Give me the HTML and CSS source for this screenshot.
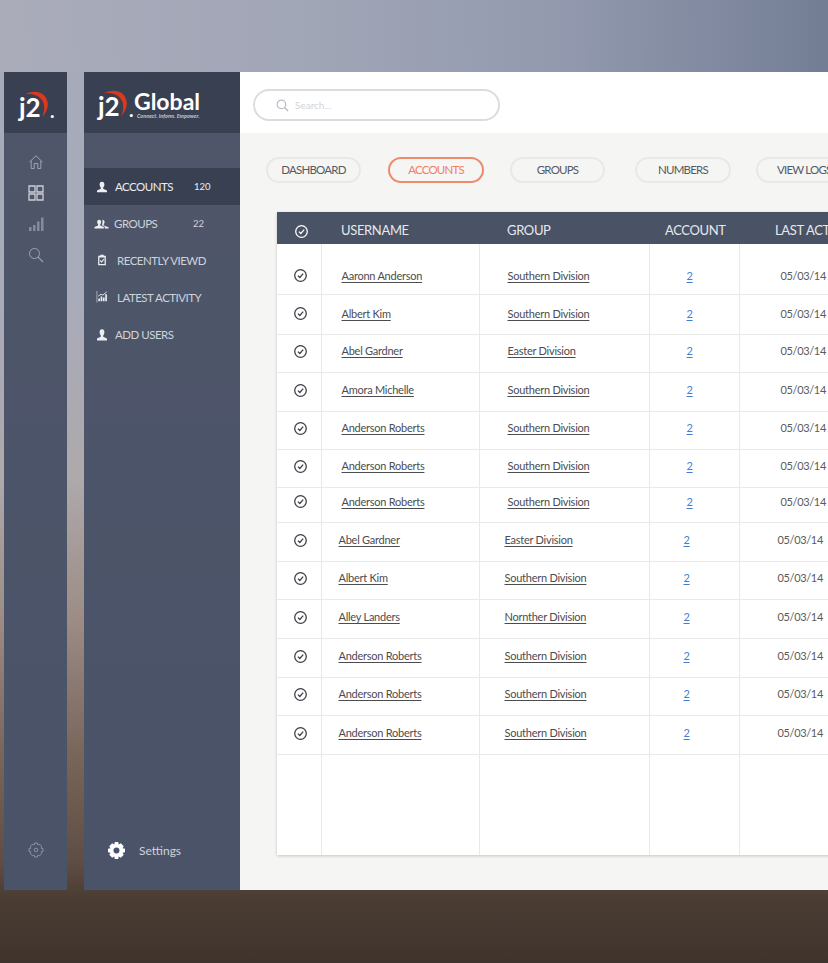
FILE: index.html
```html
<!DOCTYPE html>
<html lang="en">
<head>
    <meta charset="UTF-8">
    <meta name="viewport" content="width=device-width, initial-scale=1.0">
    <title>j2 Global - Accounts</title>
    <link rel="stylesheet" href="styles.css">
</head>
<body>
    <svg class="icon-defs" width="0" height="0">
        <symbol id="check" viewBox="0 0 14 14">
            <circle cx="7" cy="7" r="5.4" fill="none" stroke="currentColor" stroke-width="1.2"/>
            <path d="M4.6 7.1 6.4 8.9 9.5 5.3" fill="none" stroke="currentColor" stroke-width="1.2"/>
        </symbol>
        <symbol id="arc" viewBox="0 0 30 30">
            <path d="M1 4C9-1 24-1 27 12 28.500 18 26 25 21 30 24 23 24.500 15 20 9.500 15 4 8 2.800 1 4Z" fill="#d8391f"/>
        </symbol>
    </svg>

    <div class="desktop">
        <!-- Narrow icon rail -->
        <aside class="rail">
            <div class="rail-logo">
                <span class="logo">
                    <svg class="logo-arc"><use href="#arc"/></svg>
                    <span class="logo-mark">j2</span>
                    <span class="logo-dot">.</span>
                </span>
            </div>
            <nav class="rail-icons">
                <svg class="rail-icon" viewBox="0 0 16 16"><path d="M1.500 8 8 1.800 14.500 8M3.200 7V14.500H6.200V9.500H9.800V14.500H12.800V7" fill="none" stroke="currentColor"/></svg>
                <svg class="rail-icon rail-icon-grid" viewBox="0 0 16 16"><path d="M1 1H7V7H1ZM9 1H15V7H9ZM1 9H7V15H1ZM9 9H15V15H9Z" fill="none" stroke="currentColor" stroke-width="1.300"/></svg>
                <svg class="rail-icon rail-icon-dim" viewBox="0 0 16 16"><path d="M1 11H3.500V15H1ZM5 9H7.500V15H5ZM9 5.500H11.500V15H9ZM13 1.500H15.500V15H13Z" fill="currentColor" stroke="none"/></svg>
                <svg class="rail-icon" viewBox="0 0 16 16"><circle cx="6.500" cy="6.500" r="5" fill="none" stroke="currentColor"/><path d="M10.200 10.200 15 15" stroke="currentColor" stroke-width="1.200"/></svg>
            </nav>
            <svg class="rail-gear" viewBox="0 0 16 16">
                <path d="M6.600 1H9.400L9.900 3 11.700 2.300 13.700 4.300 13 6.100 15 6.600V9.400L13 9.900 13.700 11.700 11.700 13.700 9.900 13 9.400 15H6.600L6.100 13 4.300 13.700 2.300 11.700 3 9.900 1 9.400V6.600L3 6.100 2.300 4.300 4.300 2.300 6.100 3Z" fill="none" stroke="currentColor"/>
                <circle cx="8" cy="8" r="1.800" fill="none" stroke="currentColor"/>
            </svg>
        </aside>

        <!-- Main menu -->
        <aside class="sidebar">
            <div class="brand">
                <span class="logo">
                    <svg class="logo-arc"><use href="#arc"/></svg>
                    <span class="logo-mark">j2</span>
                    <span class="logo-dot">.</span>
                </span>
                <span class="brand-text">
                    <span class="brand-name">Global</span>
                    <span class="brand-tag">Connect. Inform. Empower.</span>
                </span>
            </div>
            <ul class="menu">
                <li class="menu-item menu-active">
                    <svg class="menu-icon" viewBox="0 0 12 12"><path d="M6 .8C7.700.8 8.400 2 8.400 3.500 8.400 5 7.600 6 7.200 6.600V7.800L11 9.500V11.200H1V9.500L4.800 7.800V6.600C4.400 6 3.600 5 3.600 3.500 3.600 2 4.300.8 6 .8Z" fill="currentColor"/></svg>
                    <span class="menu-label">ACCOUNTS</span>
                    <span class="menu-count">120</span>
                </li>
                <li class="menu-item menu-groups">
                    <svg class="menu-icon menu-icon-wide" viewBox="0 0 16 12"><path d="M5.500 1.500C7 1.500 7.600 2.600 7.600 3.900 7.600 5.200 6.900 6 6.600 6.600V7.500L10.500 9.300V10.800H.5V9.300L4.400 7.500V6.600C4.100 6 3.400 5.200 3.400 3.900 3.400 2.600 4 1.500 5.500 1.500Z" fill="currentColor"/><path d="M9 1.500C10.500 1.500 11.300 2.600 11.300 3.900 11.300 5.200 10.600 6 10.300 6.600V7.500L15.500 9.500V10.800H11.500V8.800L8.300 7.300C8.900 6.300 9.200 5 9 1.500Z" fill="currentColor"/></svg>
                    <span class="menu-label">GROUPS</span>
                    <span class="menu-count">22</span>
                </li>
                <li class="menu-item menu-recent">
                    <svg class="menu-icon" viewBox="0 0 12 14"><path fill-rule="evenodd" d="M1.500 2H4V.8H8V2H10.500V13.200H1.500ZM3 4V11.800H9V4Z" fill="currentColor"/><path d="M4 7.500 5.600 9.500 8.300 5.800" fill="none" stroke="currentColor" stroke-width="1.300"/></svg>
                    <span class="menu-label">RECENTLY VIEWD</span>
                </li>
                <li class="menu-item menu-latest">
                    <svg class="menu-icon" viewBox="0 0 12 13"><path d="M.5 0V12.500" stroke="currentColor" opacity=".6"/><path d="M2 8H3.800V11H2ZM4.500 6H6.300V11H4.500ZM7 7H8.800V11H7ZM9.500 3.500H11.300V11H9.500Z" fill="currentColor"/><path d="M2 5.500 5 3.500 7 4.500 11 1" fill="none" stroke="currentColor"/></svg>
                    <span class="menu-label">LATEST ACTIVITY</span>
                </li>
                <li class="menu-item menu-add">
                    <svg class="menu-icon" viewBox="0 0 12 12"><path d="M6 .2C7.700.2 8.400 1.500 8.400 3.200 8.400 4.800 7.600 6 7.200 6.600V7.800L11 9.500V11.400H1V9.500L4.800 7.800V6.600C4.400 6 3.600 4.800 3.600 3.200 3.600 1.500 4.300.2 6 .2Z" fill="currentColor"/></svg>
                    <span class="menu-label">ADD USERS</span>
                </li>
            </ul>
            <div class="settings">
                <svg class="settings-icon" viewBox="0 0 16 16"><path fill-rule="evenodd" d="M6.400 0H9.600L10.100 2.300 12.100 1.200 14.800 3.900 13.700 5.900 16 6.400V9.600L13.700 10.100 14.800 12.100 12.100 14.800 10.100 13.700 9.600 16H6.400L5.900 13.700 3.900 14.800 1.200 12.100 2.300 10.100 0 9.600V6.400L2.300 5.900 1.200 3.900 3.900 1.200 5.900 2.300ZM8 5.200A2.800 2.800 0 1 0 8 10.800 2.800 2.800 0 1 0 8 5.200Z" fill="currentColor"/></svg>
                <span>Settings</span>
            </div>
        </aside>

        <main class="main">
            <header class="topbar">
                <div class="search">
                    <svg class="search-icon" viewBox="0 0 14 14"><circle cx="5.800" cy="5.800" r="4.600" fill="none" stroke="currentColor" stroke-width="1.300"/><path d="M9.200 9.200 13 13" stroke="currentColor" stroke-width="1.500"/></svg>
                    <span class="search-text">Search...</span>
                </div>
            </header>

            <section class="content">
                <nav class="tabs">
                    <a class="tab">DASHBOARD</a>
                    <a class="tab tab-active">ACCOUNTS</a>
                    <a class="tab">GROUPS</a>
                    <a class="tab tab-numbers">NUMBERS</a>
                    <a class="tab tab-logs">VIEW LOGS</a>
                </nav>

                <table class="users">
                    <colgroup>
                        <col class="col-check">
                        <col class="col-name">
                        <col class="col-group">
                        <col class="col-account">
                        <col class="col-date">
                    </colgroup>
                    <thead>
                        <tr>
                            <th class="cell-check"><svg class="check"><use href="#check"/></svg></th>
                            <th>USERNAME</th>
                            <th class="th-group">GROUP</th>
                            <th class="th-account">ACCOUNT</th>
                            <th class="th-date">LAST ACTIVITY</th>
                        </tr>
                    </thead>
                    <tbody>
                        <tr class="shifted">
                            <td class="cell-check"><svg class="check"><use href="#check"/></svg></td>
                            <td><a>Aaronn Anderson</a></td>
                            <td class="cell-group"><a>Southern Division</a></td>
                            <td class="cell-account"><a>2</a></td>
                            <td class="cell-date">05/03/14</td>
                        </tr>
                        <tr class="shifted">
                            <td class="cell-check"><svg class="check"><use href="#check"/></svg></td>
                            <td><a>Albert Kim</a></td>
                            <td class="cell-group"><a>Southern Division</a></td>
                            <td class="cell-account"><a>2</a></td>
                            <td class="cell-date">05/03/14</td>
                        </tr>
                        <tr class="shifted">
                            <td class="cell-check"><svg class="check"><use href="#check"/></svg></td>
                            <td><a>Abel Gardner</a></td>
                            <td class="cell-group"><a>Easter Division</a></td>
                            <td class="cell-account"><a>2</a></td>
                            <td class="cell-date">05/03/14</td>
                        </tr>
                        <tr class="shifted">
                            <td class="cell-check"><svg class="check"><use href="#check"/></svg></td>
                            <td><a>Amora Michelle</a></td>
                            <td class="cell-group"><a>Southern Division</a></td>
                            <td class="cell-account"><a>2</a></td>
                            <td class="cell-date">05/03/14</td>
                        </tr>
                        <tr class="shifted">
                            <td class="cell-check"><svg class="check"><use href="#check"/></svg></td>
                            <td><a>Anderson Roberts</a></td>
                            <td class="cell-group"><a>Southern Division</a></td>
                            <td class="cell-account"><a>2</a></td>
                            <td class="cell-date">05/03/14</td>
                        </tr>
                        <tr class="shifted">
                            <td class="cell-check"><svg class="check"><use href="#check"/></svg></td>
                            <td><a>Anderson Roberts</a></td>
                            <td class="cell-group"><a>Southern Division</a></td>
                            <td class="cell-account"><a>2</a></td>
                            <td class="cell-date">05/03/14</td>
                        </tr>
                        <tr class="shifted">
                            <td class="cell-check"><svg class="check"><use href="#check"/></svg></td>
                            <td><a>Anderson Roberts</a></td>
                            <td class="cell-group"><a>Southern Division</a></td>
                            <td class="cell-account"><a>2</a></td>
                            <td class="cell-date">05/03/14</td>
                        </tr>
                        <tr>
                            <td class="cell-check"><svg class="check"><use href="#check"/></svg></td>
                            <td><a>Abel Gardner</a></td>
                            <td class="cell-group"><a>Easter Division</a></td>
                            <td class="cell-account"><a>2</a></td>
                            <td class="cell-date">05/03/14</td>
                        </tr>
                        <tr>
                            <td class="cell-check"><svg class="check"><use href="#check"/></svg></td>
                            <td><a>Albert Kim</a></td>
                            <td class="cell-group"><a>Southern Division</a></td>
                            <td class="cell-account"><a>2</a></td>
                            <td class="cell-date">05/03/14</td>
                        </tr>
                        <tr>
                            <td class="cell-check"><svg class="check"><use href="#check"/></svg></td>
                            <td><a>Alley Landers</a></td>
                            <td class="cell-group"><a>Nornther Division</a></td>
                            <td class="cell-account"><a>2</a></td>
                            <td class="cell-date">05/03/14</td>
                        </tr>
                        <tr>
                            <td class="cell-check"><svg class="check"><use href="#check"/></svg></td>
                            <td><a>Anderson Roberts</a></td>
                            <td class="cell-group"><a>Southern Division</a></td>
                            <td class="cell-account"><a>2</a></td>
                            <td class="cell-date">05/03/14</td>
                        </tr>
                        <tr>
                            <td class="cell-check"><svg class="check"><use href="#check"/></svg></td>
                            <td><a>Anderson Roberts</a></td>
                            <td class="cell-group"><a>Southern Division</a></td>
                            <td class="cell-account"><a>2</a></td>
                            <td class="cell-date">05/03/14</td>
                        </tr>
                        <tr>
                            <td class="cell-check"><svg class="check"><use href="#check"/></svg></td>
                            <td><a>Anderson Roberts</a></td>
                            <td class="cell-group"><a>Southern Division</a></td>
                            <td class="cell-account"><a>2</a></td>
                            <td class="cell-date">05/03/14</td>
                        </tr>
                        <tr class="filler">
                            <td></td>
                            <td></td>
                            <td></td>
                            <td></td>
                            <td></td>
                        </tr>
                    </tbody>
                </table>
            </section>
        </main>
    </div>
</body>
</html>
```

FILE: styles.css
```css
html, body {
    height: 100%;
}
body {
    margin: 0;
    overflow: hidden;
    font-family: Lato, "Open Sans", Arial, sans-serif;
    background:
        linear-gradient(90deg, rgba(170, 172, 186, .9) 0, rgba(160, 165, 182, .8) 300px, rgba(142, 150, 172, .8) 560px, rgba(112, 123, 147, .95) 828px) 0 0 / 100% 72px no-repeat,
        linear-gradient(180deg, #a6a9b8 0, #a8abb9 300px, #aea9ab 480px, #9c8c85 620px, #7a675c 750px, #5f4e43 860px, #4a3c33 900px, #3f342d 963px);
}
.icon-defs {
    position: absolute;
}
.desktop {
    display: flex;
    height: 818px;
    padding: 72px 0 0 4px;
}

/* Logo */
.logo {
    position: relative;
    display: inline-block;
    flex-shrink: 0;
    width: 36px;
    height: 30px;
    color: #fff;
}
.logo-mark {
    position: absolute;
    left: 0;
    top: 6px;
    font-size: 26px;
    line-height: 24px;
    font-weight: 700;
}
.logo-arc {
    position: absolute;
    left: 5px;
    top: 2px;
    width: 26px;
    height: 26px;
}
.logo-dot {
    position: absolute;
    left: 31px;
    top: 16px;
    font-size: 19px;
    line-height: 12px;
    font-weight: 700;
}

/* Rail */
.rail {
    display: flex;
    flex-direction: column;
    align-items: center;
    width: 63px;
    margin-right: 17px;
    background: linear-gradient(180deg, #4f566a, #4a5368);
    color: #aeb3bf;
}
.rail-logo {
    display: flex;
    justify-content: center;
    align-items: center;
    width: 100%;
    height: 61px;
    padding: 3px 0 0 3px;
    box-sizing: border-box;
    background: #394052;
}
.rail-icons {
    display: flex;
    flex-direction: column;
    align-items: center;
    flex: 1;
    padding-top: 21px;
}
.rail-icon {
    width: 16px;
    height: 16px;
    margin-bottom: 15px;
    color: #9da3b1;
}
.rail-icon-grid {
    color: #ccd0d8;
}
.rail-icon-dim {
    color: #848b9c;
}
.rail-gear {
    width: 16px;
    height: 16px;
    margin-bottom: 32px;
    color: #8b92a3;
}

/* Sidebar */
.sidebar {
    display: flex;
    flex-direction: column;
    width: 156px;
    flex-shrink: 0;
    background: linear-gradient(180deg, #4f566a, #4a5368);
    color: #cfd3da;
    font-size: 11.5px;
}
.brand {
    display: flex;
    align-items: center;
    height: 61px;
    padding-left: 14px;
    background: #394052;
    box-sizing: border-box;
}
.brand-text {
    display: flex;
    flex-direction: column;
    padding-top: 4px;
    color: #fff;
}
.brand-name {
    font-size: 23px;
    line-height: 22px;
    font-weight: 700;
}
.brand-tag {
    margin: 1px 0 0 3px;
    font-size: 5.5px;
    line-height: 6px;
    font-style: italic;
    color: #c5c9d2;
    font-weight: 700;
    white-space: nowrap;
}
.menu {
    list-style: none;
    margin: 35px 0 0;
    padding: 0;
    flex: 1;
}
.menu-item {
    display: flex;
    align-items: center;
    height: 37px;
    padding-left: 12px;
}
.menu-active {
    background: #394052;
    color: #eceef1;
}
.menu-icon {
    width: 12px;
    height: 12px;
    color: #eceef1;
}
.menu-icon-wide {
    width: 15px;
}
.menu-label {
    margin-left: 7px;
    width: 79px;
    white-space: nowrap;
    letter-spacing: -.5px;
}
.menu-count {
    font-size: 9.5px;
}
.menu-groups {
    padding-left: 10px;
}
.menu-groups .menu-label {
    margin-left: 5px;
}
.menu-recent .menu-label, .menu-latest .menu-label {
    margin-left: 9px;
}
.menu-recent {
    height: 36px;
}
.menu-latest {
    height: 38px;
}
.settings {
    display: flex;
    align-items: center;
    height: 78px;
    padding-left: 24px;
    padding-bottom: 1px;
    box-sizing: border-box;
    font-size: 12px;
}
.settings-icon {
    width: 17px;
    height: 17px;
    margin-right: 14px;
    color: #fff;
}

/* Main */
.main {
    flex: 1;
    min-width: 0;
    overflow: hidden;
    background: #f5f5f4;
}
.topbar {
    height: 61px;
    padding: 17px 0 0 13px;
    box-sizing: border-box;
    background: #fff;
}
.search {
    display: flex;
    align-items: center;
    width: 247px;
    height: 32px;
    padding-left: 21px;
    box-sizing: border-box;
    border: 2px solid #dcdcda;
    border-radius: 16px;
}
.search-icon {
    width: 13px;
    height: 13px;
    color: #b8bcc4;
}
.search-text {
    margin-left: 6px;
    font-size: 10px;
    color: #d2d4d8;
}
.content {
    padding-top: 24px;
}
.tabs {
    display: flex;
    padding-left: 26px;
}
.tab {
    flex-shrink: 0;
    width: 95px;
    height: 26px;
    margin-right: 27px;
    box-sizing: border-box;
    border: 2px solid #e8e8e7;
    border-radius: 13px;
    font-size: 11.5px;
    letter-spacing: -.8px;
    line-height: 22px;
    text-align: center;
    color: #555a64;
    white-space: nowrap;
}
.tab-active {
    width: 96px;
    margin-right: 26px;
    border-color: #ee8a6c;
    color: #ee8061;
}
.tab-numbers {
    width: 96px;
    margin-left: 3px;
    margin-right: 25px;
}
.tab-logs {
    padding-left: 19px;
    text-align: left;
}

/* Table */
.users {
    table-layout: fixed;
    border-collapse: collapse;
    width: 640px;
    margin: 29px 0 0 37px;
    background: #fff;
    box-shadow: 0 1px 3px rgba(0, 0, 0, .2);
    font-size: 11px;
    letter-spacing: -.25px;
    color: #4c4c4f;
}
.col-check { width: 44px; }
.col-name { width: 158px; }
.col-group { width: 170px; }
.col-account { width: 90px; }
.col-date { width: 178px; }
.users th {
    height: 32px;
    padding: 4px 0 0 20px;
    box-sizing: border-box;
    background: #4a5365;
    color: #e6e8ec;
    font-size: 13px;
    font-weight: 400;
    letter-spacing: -.35px;
    text-align: left;
    white-space: nowrap;
}
.users th.th-group {
    padding-left: 28px;
}
.users th.th-account {
    padding-left: 16px;
}
.users th.th-date {
    padding-left: 36px;
}
.users th.cell-check {
    padding: 4px 0 0 4px;
    text-align: center;
    color: #fff;
}
.users td {
    height: 38px;
    padding: 0 0 5px 17px;
    box-sizing: border-box;
    border-right: 1px solid #e9e9e9;
    border-bottom: 1px solid #e9e9e9;
    white-space: nowrap;
}
.users td.cell-check {
    padding: 0 0 3px 4px;
    text-align: center;
}
.users a {
    text-decoration: underline;
    text-underline-offset: 2px;
}
.users td.cell-group {
    padding-left: 25px;
}
.users td.cell-account {
    padding-left: 34px;
    color: #3f7fd6;
}
.users td.cell-date {
    padding-left: 38px;
    border-right: 0;
    letter-spacing: -.35px;
    color: #5a5a5c;
}
.shifted td {
    padding-left: 20px;
}
.users .shifted td.cell-group {
    padding-left: 28px;
}
.users .shifted td.cell-account {
    padding-left: 37px;
}
.users .shifted td.cell-date {
    padding-left: 41px;
}
.users tbody tr:nth-child(1) td {
    height: 50px;
    padding-top: 15px;
    padding-bottom: 2px;
}
.users tbody tr:nth-child(2) td {
    height: 40px;
    padding-bottom: 2px;
}
.users tbody tr:nth-child(7) td {
    height: 35px;
    padding-bottom: 7px;
}
.users tbody tr:nth-child(4) td,
.users tbody tr:nth-child(8) td,
.users tbody tr:nth-child(10) td,
.users tbody tr:nth-child(11) td,
.users tbody tr:nth-child(13) td {
    height: 39px;
}
.users .filler td {
    height: 101px;
    border-bottom: 0;
}
.check {
    display: inline-block;
    vertical-align: middle;
    width: 15px;
    height: 15px;
    color: #3c3f46;
}
.users th .check {
    color: #fff;
}
```
